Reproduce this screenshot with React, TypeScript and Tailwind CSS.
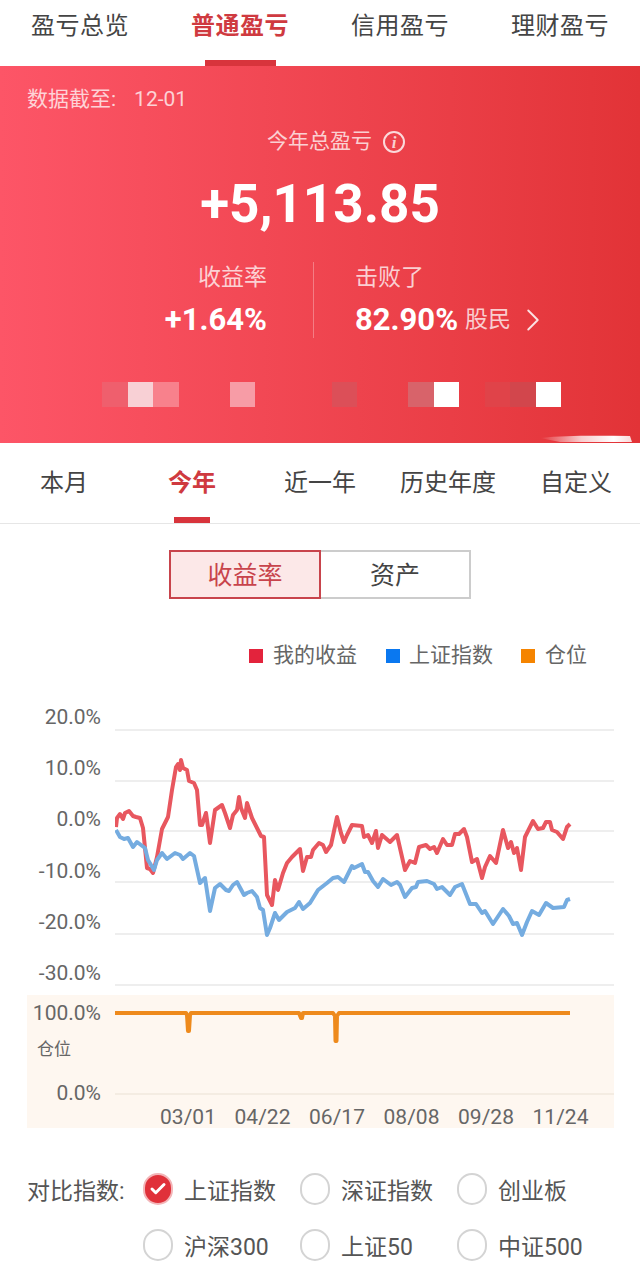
import React from 'react';
import { Check, ChevronRight } from 'lucide-react';

const topTabs = ['盈亏总览', '普通盈亏', '信用盈亏', '理财盈亏'];
const periods = ['本月', '今年', '近一年', '历史年度', '自定义'];
const yLabels = ['20.0%', '10.0%', '0.0%', '-10.0%', '-20.0%', '-30.0%'];
const xLabels = ['03/01', '04/22', '06/17', '08/08', '09/28', '11/24'];
const gridLines = [730, 781, 831, 882, 934, 985];

// blurred-out strip under the stats, one entry per mosaic cell
const mosaic = [
  'bg-[#ef5f6d]', 'bg-[#f8d0d5]', 'bg-[#f8818c]', 'bg-transparent', 'bg-transparent', 'bg-[#f79ca6]',
  'bg-transparent', 'bg-transparent', 'bg-transparent', 'bg-[#dc4f58]', 'bg-transparent', 'bg-transparent',
  'bg-[#d8636a]', 'bg-white', 'bg-transparent', 'bg-[#e04349]', 'bg-[#d2464c]', 'bg-white',
];

const redLine =
  '116,827 117,818 120,814 123,819 125,813 129,811 133,816 136,817 140,818 143,828 147,868 150,869 153,873 157,857 162,829 168,817 172,790 176,767 178,764 180,770 181,760 183,768 187,770 189,781 194,783 197,790 200,825 202,825 206,813 207,820 210,843 215,810 222,805 225,813 230,828 233,815 237,810 239,797 241,808 245,818 247,803 252,818 257,828 261,836 264,837 267,895 272,905 275,880 278,890 283,873 287,863 292,857 300,849 303,871 307,857 311,857 313,850 319,843 323,845 326,852 331,845 337,817 341,833 344,842 347,835 352,825 362,826 364,837 368,835 372,843 376,831 378,848 382,835 390,842 397,835 405,870 410,861 415,863 419,847 426,845 430,849 434,847 437,853 443,839 447,845 452,845 455,834 459,834 464,829 467,837 472,862 477,859 482,878 485,867 490,856 496,863 503,830 508,848 511,842 514,853 517,848 521,870 525,837 533,821 538,829 543,828 546,822 550,822 552,830 557,832 563,839 567,827 570,824';

const blueLine =
  '116,830 120,837 124,839 128,838 133,847 137,842 145,848 148,860 154,870 157,860 162,853 167,859 175,853 180,855 183,859 190,853 194,856 200,883 205,878 210,911 215,888 220,884 226,890 229,891 233,885 237,882 244,895 247,893 252,891 257,897 260,908 263,910 267,935 270,928 275,913 279,920 287,912 295,908 299,902 303,909 310,903 318,890 327,883 333,878 338,877 344,882 352,866 354,868 362,864 365,872 368,872 373,881 378,887 383,879 391,885 397,882 400,885 405,897 412,888 416,887 418,882 427,881 434,884 437,889 442,887 450,895 455,887 462,884 470,904 476,904 482,913 485,911 493,924 497,918 503,909 509,916 513,924 517,923 522,935 527,922 532,911 539,915 546,903 553,908 564,907 567,900 570,899';

const positionLine =
  '115,1013 186,1013 187,1015 188,1031 189,1031 190,1015 191,1013 299,1013 301,1018 302,1018 303,1013 333,1013 335,1016 335.5,1041 336.5,1041 337,1016 339,1013 570,1013';

const Radio = ({ label, checked }: { label: string; checked?: boolean }) => (
  <div className="flex h-[36px] items-center gap-[11px]">
    {checked ? (
      <span className="flex h-[32px] w-[30px] items-center justify-center rounded-full border-2 border-[#f3b5b8] bg-[#e0313a]">
        <Check size={18} strokeWidth={4} className="text-white" />
      </span>
    ) : (
      <span className="h-[32px] w-[30px] rounded-full border-2 border-[#d4d4d4] bg-white" />
    )}
    <span className="pt-[5px] text-[23px] leading-[32px] text-[#555]">{label}</span>
  </div>
);

const App: React.FC = () => {
  return (
    <div className="h-[1268px] w-[640px] overflow-hidden bg-white font-[Roboto,'Noto_Sans_CJK_SC',sans-serif]">
      <nav className="grid h-[66px] grid-cols-4">
        {topTabs.map((tab, i) => (
          <div key={tab} className="relative pt-[9px] text-center">
            <span className={`text-[24px] leading-[34px] tracking-[0.5px] ${i === 1 ? 'font-bold text-[#cf3a40]' : 'text-[#444]'}`}>
              {tab}
            </span>
            {i === 1 && <div className="absolute bottom-0 left-[45px] h-[6px] w-[71px] bg-[#d8343c]" />}
          </div>
        ))}
      </nav>

      <section className="relative h-[377px] bg-gradient-to-r from-[#fd5567] to-[#e23337] pt-[20px] text-white">
        <div className="flex h-[28px] items-center pl-[27px] text-[21px] text-white/75">
          <span>数据截至:</span>
          <span className="ml-[18px]">12-01</span>
        </div>
        <div className="ml-[267px] mt-[14px] flex h-[28px] items-center gap-[11px] text-[21px] text-white/75">
          今年总盈亏
          <span className="flex h-[22px] w-[22px] items-center justify-center rounded-full border-2 border-white/80 font-['Liberation_Serif',serif] text-[17px] font-bold italic leading-none">
            i
          </span>
        </div>
        <div className="mt-[18px] text-center text-[53px] font-bold leading-[60px]">+5,113.85</div>

        <div className="mt-[28px] flex h-[76px]">
          <div className="w-[267px] text-right">
            <div className="pt-[1px] text-[23px] leading-[30px] text-white/75">收益率</div>
            <div className="mt-[8px] text-[31px] font-bold leading-[38px]">+1.64%</div>
          </div>
          <div className="ml-[46px] w-px bg-white/30" />
          <div className="ml-[41px]">
            <div className="pt-[1px] text-[23px] leading-[30px] text-white/75">击败了</div>
            <div className="mt-[8px] flex h-[38px] items-center">
              <span className="text-[31px] font-bold">82.90%</span>
              <span className="ml-[7px] text-[23px] text-white/75">股民</span>
              <ChevronRight size={38} strokeWidth={1.2} className="ml-[3px] text-white/85" />
            </div>
          </div>
        </div>

        <div className="mt-[44px] flex h-[25px] pl-[102px]">
          {mosaic.map((c, i) => (
            <div key={i} className={`w-[25.5px] ${c}`} />
          ))}
        </div>
        <svg className="absolute bottom-0 right-0" width="100" height="10" viewBox="0 0 100 10">
          <defs>
            <linearGradient id="glare" x1="0" x2="1" y1="0" y2="0">
              <stop offset="0" stopColor="white" stopOpacity="0" />
              <stop offset="0.45" stopColor="white" stopOpacity="0.75" />
              <stop offset="0.8" stopColor="white" stopOpacity="1" />
              <stop offset="1" stopColor="white" stopOpacity="0.8" />
            </linearGradient>
          </defs>
          <path d="M0 5 C30 2 60 3 90 3 L92 9 L20 9 Z" fill="url(#glare)" />
        </svg>
      </section>

      <div className="grid h-[81px] grid-cols-5 border-b border-[#e6e6e6]">
        {periods.map((p, i) => (
          <div key={p} className="relative pt-[23px] text-center">
            <span className={`text-[24px] leading-[34px] ${i === 1 ? 'font-bold text-[#cf3a40]' : 'text-[#444]'}`}>{p}</span>
            {i === 1 && <div className="absolute bottom-0 left-[46px] h-[6px] w-[36px] bg-[#d8343c]" />}
          </div>
        ))}
      </div>

      <div className="ml-[169px] mt-[26px] flex h-[49px] w-[302px]">
        <div className="flex w-[152px] items-center justify-center border-2 border-[#c8444c] bg-[#fce8e8] pt-[2px] text-[25px] text-[#c8444c]">
          收益率
        </div>
        <div className="flex flex-1 items-center justify-center border-2 border-l-0 border-[#cccccc] pt-[2px] text-[25px] text-[#444]">
          资产
        </div>
      </div>

      <div className="mt-[41px] flex h-[32px] items-center justify-end pr-[53px] text-[21px] text-[#666]">
        <span className="h-[14px] w-[14px] bg-[#e3233c]" />
        <span className="ml-[10px]">我的收益</span>
        <span className="ml-[29px] h-[14px] w-[14px] bg-[#0a78f0]" />
        <span className="ml-[9px]">上证指数</span>
        <span className="ml-[28px] h-[14px] w-[14px] bg-[#f58400]" />
        <span className="ml-[10px]">仓位</span>
      </div>

      <div className="mt-[18px] flex h-[311px]">
        <div className="w-[101px] pt-[13px] text-right text-[21px] text-[#666]">
          {yLabels.map(l => (
            <div key={l} className="h-[51.2px] leading-[28px]">
              {l}
            </div>
          ))}
        </div>
        <svg className="ml-[14px]" width="499" height="311" viewBox="115 690 499 311">
          {gridLines.map(y => (
            <line key={y} x1="115" x2="614" y1={y} y2={y} stroke="#e8e8e8" strokeWidth="1.5" />
          ))}
          <polyline points={redLine} fill="none" stroke="#e8575f" strokeWidth="4" strokeLinejoin="round" />
          <polyline points={blueLine} fill="none" stroke="#75ace0" strokeWidth="4" strokeLinejoin="round" />
        </svg>
      </div>

      <div className="relative ml-[27px] mt-[-6px] flex h-[133px] w-[587px] bg-[#fef7f0]">
        <div className="w-[74px] pt-[4px] text-right text-[21px] text-[#666]">
          <div className="leading-[28px]">100.0%</div>
          <div className="mt-[10px] pr-[30px] text-[17px] leading-[24px]">仓位</div>
          <div className="mt-[18px] leading-[28px]">0.0%</div>
        </div>
        <div className="ml-[14px] flex-1">
          <svg width="499" height="108" viewBox="115 995 499 108" className="block">
            <line x1="115" x2="614" y1="1094" y2="1094" stroke="#f0e8de" strokeWidth="1.5" />
            <polyline points={positionLine} fill="none" stroke="#ee8a1c" strokeWidth="4" strokeLinejoin="round" />
          </svg>
          <div className="ml-[45px] flex gap-[18.5px] text-[21px] leading-[28px] text-[#666]">
            {xLabels.map(l => (
              <span key={l} className="w-[56px] text-center">
                {l}
              </span>
            ))}
          </div>
        </div>
      </div>

      <div className="mt-[43px] flex pl-[27px]">
        <div className="w-[116px] pt-[5px] text-[23px] leading-[32px] text-[#555]">对比指数:</div>
        <div className="grid w-[470px] grid-cols-[157px_157px_1fr] gap-y-[20px]">
          <Radio label="上证指数" checked />
          <Radio label="深证指数" />
          <Radio label="创业板" />
          <Radio label="沪深300" />
          <Radio label="上证50" />
          <Radio label="中证500" />
        </div>
      </div>
    </div>
  );
};

export default App;
